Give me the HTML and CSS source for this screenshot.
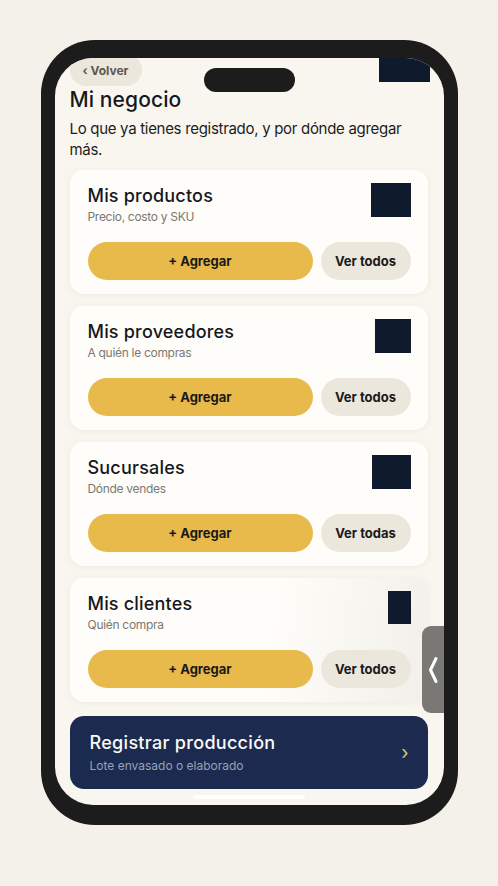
FILE: index.html
```html
<!DOCTYPE html>
<html lang="es">
<head>
    <meta charset="UTF-8">
    <meta name="viewport" content="width=device-width, initial-scale=1.0">
    <title>Mi negocio</title>
    <link rel="stylesheet" href="styles.css">
</head>
<body>

<div class="phone">
    <div class="screen">
        <div class="island"></div>

        <div class="content">
            <div class="topbar">
                <button class="back">&lsaquo; Volver</button>
                <div class="logo"></div>
            </div>

            <h1>Mi negocio</h1>
            <p class="intro">Lo que ya tienes registrado, y por dónde agregar más.</p>

            <div class="card">
                <div class="card-head">
                    <div>
                        <h2>Mis productos</h2>
                        <div class="hint">Precio, costo y SKU</div>
                    </div>
                    <div class="thumb" style="width: 40px;"></div>
                </div>
                <div class="actions">
                    <button class="add">+ Agregar</button>
                    <button class="see">Ver todos</button>
                </div>
            </div>

            <div class="card">
                <div class="card-head">
                    <div>
                        <h2>Mis proveedores</h2>
                        <div class="hint">A quién le compras</div>
                    </div>
                    <div class="thumb" style="width: 36px;"></div>
                </div>
                <div class="actions">
                    <button class="add">+ Agregar</button>
                    <button class="see">Ver todos</button>
                </div>
            </div>

            <div class="card">
                <div class="card-head">
                    <div>
                        <h2>Sucursales</h2>
                        <div class="hint">Dónde vendes</div>
                    </div>
                    <div class="thumb" style="width: 39px;"></div>
                </div>
                <div class="actions">
                    <button class="add">+ Agregar</button>
                    <button class="see">Ver todas</button>
                </div>
            </div>

            <div class="card card-shade">
                <div class="card-head">
                    <div>
                        <h2>Mis clientes</h2>
                        <div class="hint">Quién compra</div>
                    </div>
                    <div class="thumb" style="width: 23px; height: 33px;"></div>
                </div>
                <div class="actions">
                    <button class="add">+ Agregar</button>
                    <button class="see">Ver todos</button>
                </div>
            </div>

            <div class="cta">
                <div>
                    <div class="cta-title">Registrar producción</div>
                    <div class="cta-hint">Lote envasado o elaborado</div>
                </div>
                <span class="cta-arrow">&rsaquo;</span>
            </div>
        </div>

        <div class="side-tab">
            <svg width="10" height="26" viewBox="0 0 10 26">
                <polyline points="8,1.5 2.5,13 8,24.5" fill="none" stroke="#fff" stroke-width="3" stroke-linecap="round" stroke-linejoin="round"/>
            </svg>
        </div>

        <div class="home-bar"></div>
    </div>
</div>

</body>
</html>
```

FILE: styles.css
```css
body {
    font-family: Inter, "Noto Sans", sans-serif;
    margin: 0;
    padding: 40px 0 0;
    background-color: #f4f1eb;
    display: flex;
    justify-content: center;
    color: #16181d;
}
.phone {
    width: 417px;
    height: 785px;
    box-sizing: border-box;
    padding: 18px 14px 20px 14px;
    background-color: #1c1c1c;
    border-radius: 54px;
}
.screen {
    position: relative;
    height: 100%;
    background-color: #f9f6ef;
    border-radius: 38px;
    overflow: hidden;
}
.island {
    position: absolute;
    top: 10px;
    left: 149px;
    width: 91px;
    height: 24px;
    border-radius: 12px;
    background-color: #1c1c1c;
    z-index: 2;
}
.content {
    padding: 0 16px 0 15px;
    margin-top: -4px;
}
.topbar {
    display: flex;
    justify-content: space-between;
    align-items: flex-start;
}
.back {
    width: 72px;
    height: 32px;
    border: none;
    border-radius: 16px;
    background-color: #ece7dd;
    color: #5b5750;
    font-family: Inter, sans-serif;
    font-size: 12px;
    font-weight: 700;
    padding: 0;
}
.logo {
    width: 51px;
    height: 28px;
    background-color: #0f1a2d;
    margin-right: -2px;
}
h1 {
    font-size: 21px;
    font-weight: 500;
    letter-spacing: 0.1px;
    margin: 0;
    line-height: 28px;
}
.intro {
    font-size: 15px;
    line-height: 21px;
    letter-spacing: -0.3px;
    margin: 4px 0 10px;
    color: #1b1d22;
}
.card {
    background-color: #fefdf9;
    border-radius: 14px;
    padding: 14px 17px 14px 18px;
    margin-bottom: 12px;
    box-shadow: 0 1px 6px rgba(120, 100, 70, 0.08);
}
.card-shade {
    background: linear-gradient(100deg, #fefdf9 55%, #f1efe9 100%);
}
.card-head {
    display: flex;
    justify-content: space-between;
    align-items: flex-start;
}
.card h2 {
    font-size: 18px;
    font-weight: 500;
    line-height: 24px;
    margin: 0;
    letter-spacing: 0.2px;
}
.hint {
    font-size: 12px;
    line-height: 16px;
    letter-spacing: -0.3px;
    color: #7a7873;
    margin-top: 1px;
}
.thumb {
    height: 34px;
    background-color: #0f1a2d;
    margin-top: -1px;
}
.actions {
    display: flex;
    gap: 8px;
    margin-top: 17px;
}
.actions button {
    height: 38px;
    border: none;
    border-radius: 19px;
    font-family: Inter, sans-serif;
    font-size: 13px;
    font-weight: 700;
    color: #1a1a1a;
}
.add {
    flex: 1;
    background-color: #e8b94b;
}
.see {
    width: 90px;
    background-color: #ece7dd;
}
.cta {
    display: flex;
    justify-content: space-between;
    align-items: center;
    margin-top: 14px;
    height: 73px;
    box-sizing: border-box;
    padding: 0 20px;
    border-radius: 14px;
    background: linear-gradient(90deg, #1b2a4f, #1e2b50);
}
.cta-title {
    color: #fbfaf6;
    font-size: 18px;
    font-weight: 500;
    line-height: 24px;
    letter-spacing: 0.3px;
}
.cta-hint {
    color: #98a1ba;
    font-size: 12px;
    line-height: 16px;
    margin-top: 3px;
}
.cta-arrow {
    color: #e3c36a;
    font-size: 19px;
    font-weight: 400;
    margin-right: -1px;
}
.side-tab {
    position: absolute;
    right: 0;
    top: 568px;
    width: 22px;
    height: 87px;
    background-color: #7a7874;
    border-radius: 9px 0 0 9px;
    display: flex;
    align-items: center;
    justify-content: center;
}
.home-bar {
    position: absolute;
    bottom: 6px;
    left: 138px;
    width: 112px;
    height: 4px;
    border-radius: 2px;
    background-color: #ffffff;
}
```
